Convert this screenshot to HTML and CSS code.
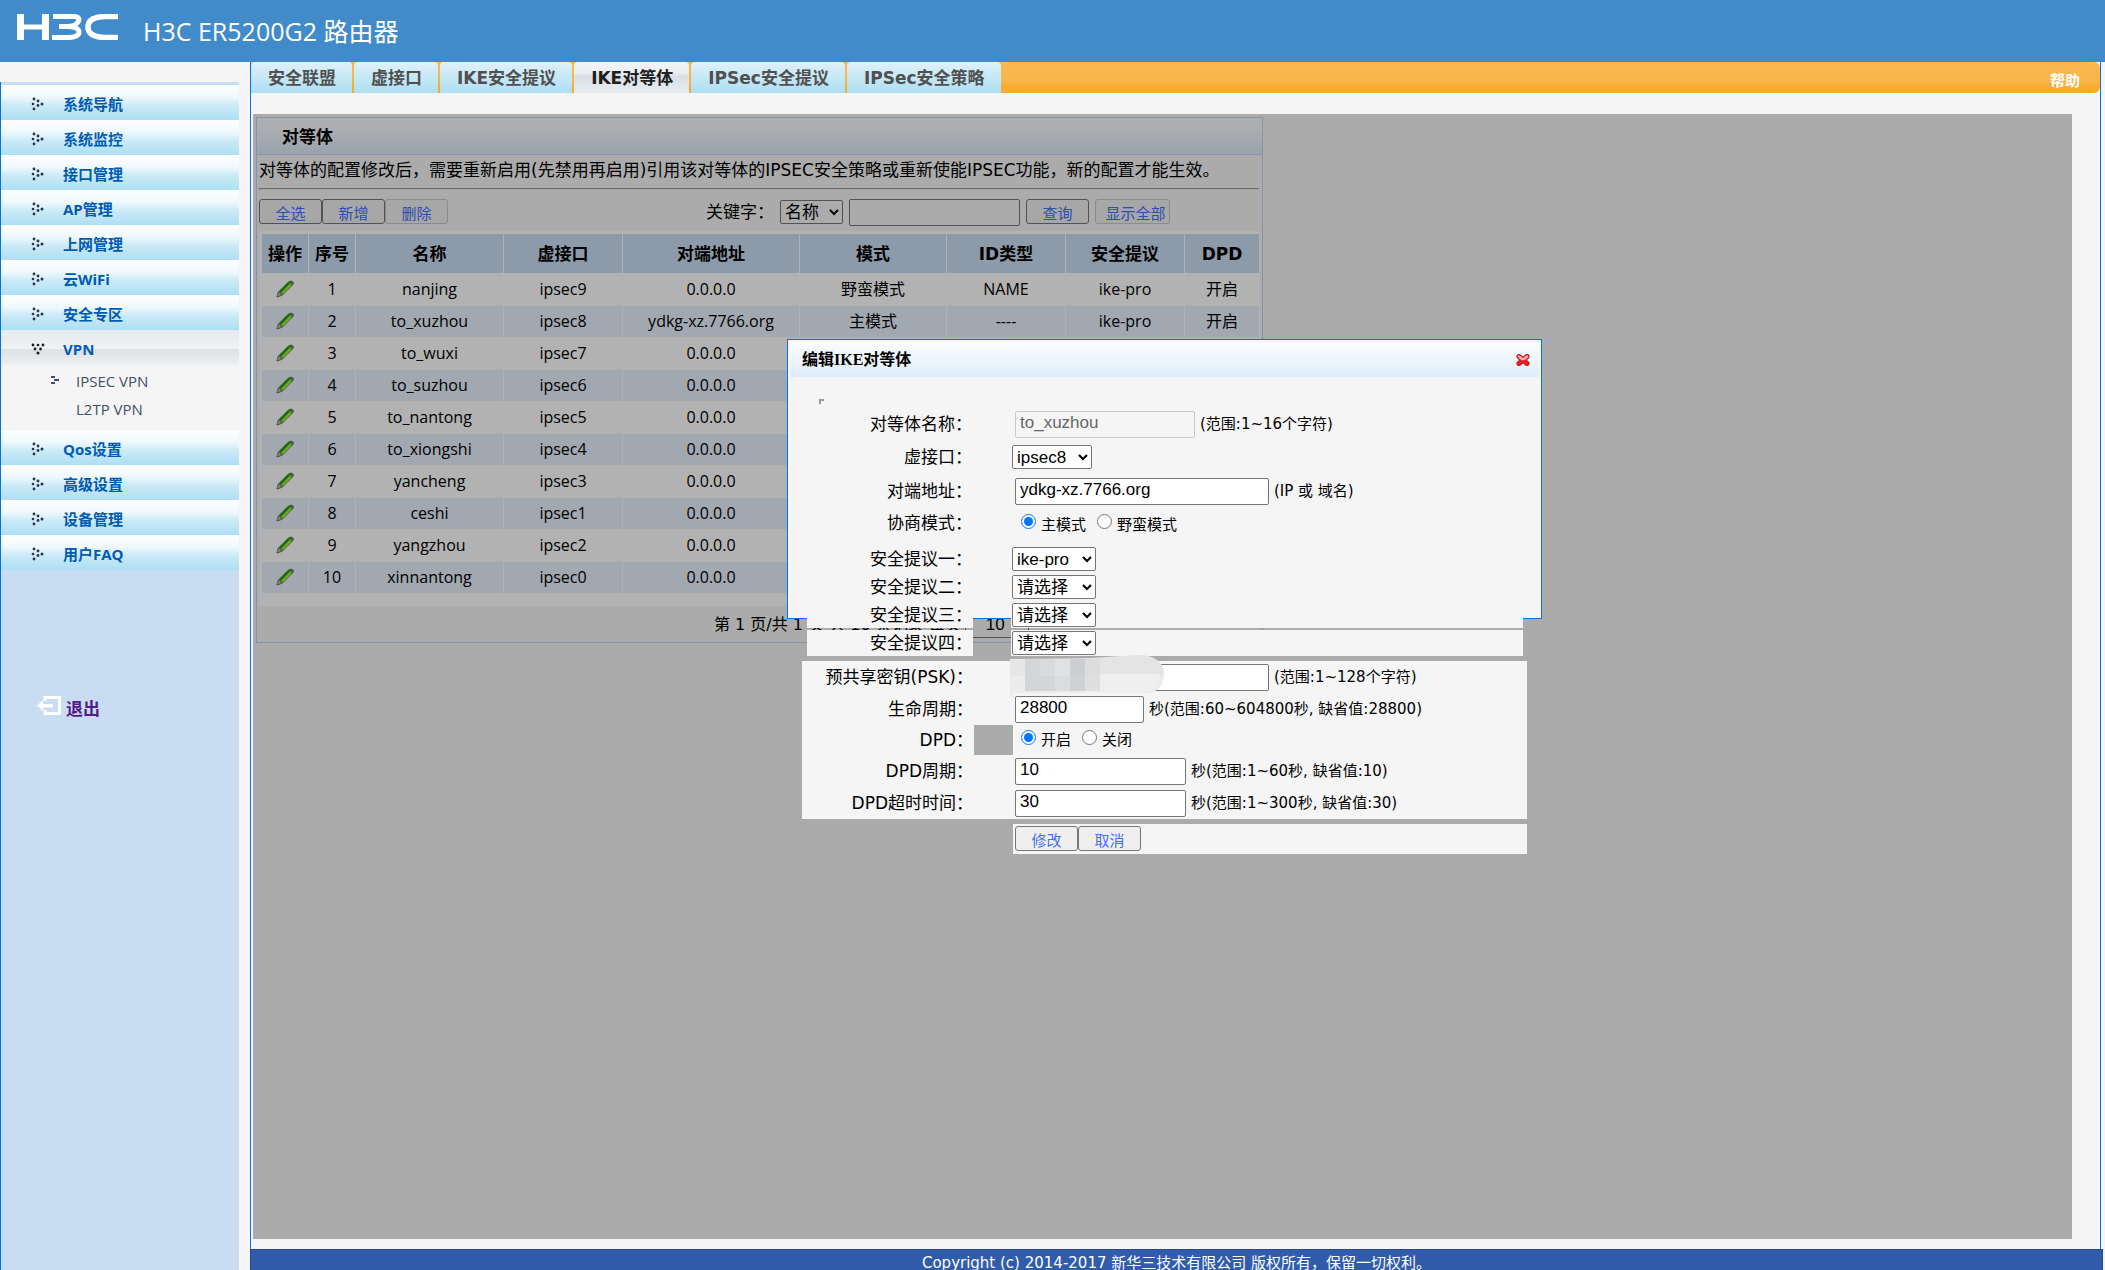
FILE: index.html
```html
<!DOCTYPE html>
<html lang="zh-CN">
<head>
<meta charset="utf-8">
<meta name="viewport" content="width=device-width, initial-scale=1">
<title>H3C ER5200G2 路由器</title>
<link rel="stylesheet" href="styles.css">
</head>
<body>
<svg class="sprite" aria-hidden="true">
  <symbol id="dots" viewBox="0 0 14 14"><g fill="#2b3550"><circle cx="3" cy="2" r="1.4"/><circle cx="7" cy="4" r="1.4"/><circle cx="2" cy="7" r="1.3"/><circle cx="11" cy="7" r="1.5"/><circle cx="7" cy="8.500" r="1.4"/><circle cx="3" cy="12" r="1.4"/></g></symbol>
  <symbol id="dots-open" viewBox="0 0 14 14"><g fill="#1c1c1c"><circle cx="2" cy="3" r="1.4"/><circle cx="7" cy="3" r="1.3"/><circle cx="12" cy="3" r="1.4"/><circle cx="4" cy="7" r="1.4"/><circle cx="9.500" cy="7" r="1.4"/><circle cx="7" cy="11" r="1.5"/></g></symbol>
  <symbol id="pencil" viewBox="0 0 18 18"><path d="M1 17 2.500 12 12.500 2Q14.500 .5 16.500 1.500T16.500 5L6.500 15Z" fill="#4fa03c" stroke="#5f7d5a"/><path d="M4 12 13 3" stroke="#1f9a1f" stroke-width="2"/><path d="M6 13.500 15 4.500" stroke="#a4e83a" stroke-width="2.500"/><path d="M1 17 2.500 12 6 15Z" fill="#c4c8ba" stroke="#7a8a74"/></symbol>
</svg>

<header class="top">
  <svg class="logo" viewBox="0 0 102 26" role="img" aria-label="H3C">
    <g fill="none" stroke="#fff">
      <path d="M3.500 0V26M28.500 0V26" stroke-width="7"/><path d="M5 13H28" stroke-width="5"/>
      <path d="M36 2.500H57Q64 3 61 8 59 12 50 12.500H42M50 12.500Q62 13 62 18T52 23.500H35" stroke-width="5"/>
      <path d="M101 2.500H88Q71 3 71 13T88 23.500H101" stroke-width="5.500"/>
    </g>
  </svg>
  <h1 class="product">H3C ER5200G2 路由器</h1>
</header>

<div class="layout">
  <nav class="side">
    <ul class="menu">
      <li><a class="item" href="#"><svg><use href="#dots"/></svg>系统导航</a></li>
      <li><a class="item" href="#"><svg><use href="#dots"/></svg>系统监控</a></li>
      <li><a class="item" href="#"><svg><use href="#dots"/></svg>接口管理</a></li>
      <li><a class="item" href="#"><svg><use href="#dots"/></svg>AP管理</a></li>
      <li><a class="item" href="#"><svg><use href="#dots"/></svg>上网管理</a></li>
      <li><a class="item" href="#"><svg><use href="#dots"/></svg>云WiFi</a></li>
      <li><a class="item" href="#"><svg><use href="#dots"/></svg>安全专区</a></li>
      <li><a class="item open" href="#"><svg><use href="#dots-open"/></svg>VPN</a>
        <ul class="submenu">
          <li><a class="current" href="#"><svg viewBox="0 0 8 8"><path d="M0 0h4v2H0zM3 3h5v2H3zM0 6h4v2H0z" fill="#3d5068"/></svg>IPSEC VPN</a></li>
          <li><a href="#">L2TP VPN</a></li>
        </ul>
      </li>
      <li><a class="item" href="#"><svg><use href="#dots"/></svg>Qos设置</a></li>
      <li><a class="item" href="#"><svg><use href="#dots"/></svg>高级设置</a></li>
      <li><a class="item" href="#"><svg><use href="#dots"/></svg>设备管理</a></li>
      <li><a class="item" href="#"><svg><use href="#dots"/></svg>用户FAQ</a></li>
    </ul>
    <a class="logout" href="#"><svg viewBox="0 0 24 20"><path d="M8 5V1.500H22.500V17.500H8V14" fill="none" stroke="#fff" stroke-width="3"/><path d="M0 9.500 6 4V8H16V11.500H6V15Z" fill="#fff"/></svg>退出</a>
  </nav>

  <main class="main">
    <div class="frame">
      <div class="tabs">
        <a class="tab" href="#">安全联盟</a>
        <a class="tab" href="#">虚接口</a>
        <a class="tab" href="#">IKE安全提议</a>
        <a class="tab active" href="#">IKE对等体</a>
        <a class="tab" href="#">IPSec安全提议</a>
        <a class="tab" href="#">IPSec安全策略</a>
        <a class="help" href="#">帮助</a>
      </div>

      <div class="content">
        <section class="panel">
          <h2 class="panel-title">对等体</h2>
          <div class="panel-body">
            <p class="tip">对等体的配置修改后，需要重新启用(先禁用再启用)引用该对等体的IPSEC安全策略或重新使能IPSEC功能，新的配置才能生效。</p>
            <hr class="rule">
            <div class="toolbar">
              <button class="btn">全选</button><button class="btn">新增</button><button class="btn" disabled>删除</button>
              <div class="search">
                <label for="field">关键字：</label>
                <select id="field" class="select"><option>名称</option></select>
                <input class="text keyword" type="text" aria-label="关键字">
                <button class="btn">查询</button>
                <button class="btn show-all" disabled>显示全部</button>
              </div>
            </div>
            <div class="table-box">
              <table class="peers">
                <colgroup><col class="c-s"><col class="c-s"><col class="c-name"><col class="c-m"><col class="c-addr"><col class="c-mode"><col class="c-m"><col class="c-m"><col class="c-dpd"></colgroup>
                <thead><tr><th>操作</th><th>序号</th><th>名称</th><th>虚接口</th><th>对端地址</th><th>模式</th><th>ID类型</th><th>安全提议</th><th>DPD</th></tr></thead>
                <tbody>
                  <tr><td><svg><use href="#pencil"/></svg></td><td>1</td><td>nanjing</td><td>ipsec9</td><td>0.0.0.0</td><td>野蛮模式</td><td>NAME</td><td>ike-pro</td><td>开启</td></tr>
                  <tr><td><svg><use href="#pencil"/></svg></td><td>2</td><td>to_xuzhou</td><td>ipsec8</td><td>ydkg-xz.7766.org</td><td>主模式</td><td>----</td><td>ike-pro</td><td>开启</td></tr>
                  <tr><td><svg><use href="#pencil"/></svg></td><td>3</td><td>to_wuxi</td><td>ipsec7</td><td>0.0.0.0</td><td></td><td></td><td></td><td></td></tr>
                  <tr><td><svg><use href="#pencil"/></svg></td><td>4</td><td>to_suzhou</td><td>ipsec6</td><td>0.0.0.0</td><td></td><td></td><td></td><td></td></tr>
                  <tr><td><svg><use href="#pencil"/></svg></td><td>5</td><td>to_nantong</td><td>ipsec5</td><td>0.0.0.0</td><td></td><td></td><td></td><td></td></tr>
                  <tr><td><svg><use href="#pencil"/></svg></td><td>6</td><td>to_xiongshi</td><td>ipsec4</td><td>0.0.0.0</td><td></td><td></td><td></td><td></td></tr>
                  <tr><td><svg><use href="#pencil"/></svg></td><td>7</td><td>yancheng</td><td>ipsec3</td><td>0.0.0.0</td><td></td><td></td><td></td><td></td></tr>
                  <tr><td><svg><use href="#pencil"/></svg></td><td>8</td><td>ceshi</td><td>ipsec1</td><td>0.0.0.0</td><td></td><td></td><td></td><td></td></tr>
                  <tr><td><svg><use href="#pencil"/></svg></td><td>9</td><td>yangzhou</td><td>ipsec2</td><td>0.0.0.0</td><td></td><td></td><td></td><td></td></tr>
                  <tr><td><svg><use href="#pencil"/></svg></td><td>10</td><td>xinnantong</td><td>ipsec0</td><td>0.0.0.0</td><td></td><td></td><td></td><td></td></tr>
                </tbody>
              </table>
            </div>
            <div class="pager">
              <label for="size">第 1 页/共 1 页 共 10 条记录 每页</label>
              <input id="size" class="text page-size" type="text" value="10">
            </div>
          </div>
        </section>
        <div class="backdrop"></div>

        <form class="dialog">
          <div class="dialog-title">
            <h2>编辑IKE对等体</h2>
            <button type="button" class="close" aria-label="关闭"><svg viewBox="0 0 14 12"><path d="M3 2.500 11 9.500M11 2.500 3 9.500" stroke="#b31d1d" stroke-width="5" stroke-linecap="round"/><path d="M3 2.500 11 9.500M11 2.500 3 9.500" stroke="#f01f1f" stroke-width="3" stroke-linecap="round"/><path d="M3 2.500 6 5M11 2.500 8 5" stroke="#ffb0b0" stroke-width="2.500" stroke-linecap="round"/></svg></button>
          </div>
          <hr class="corner">
          <div class="group upper">
            <div class="row"><label class="name" for="peer">对等体名称：</label><div class="value"><input id="peer" class="text w-180" type="text" value="to_xuzhou" disabled><span>(范围:1~16个字符)</span></div></div>
            <div class="row row-s"><label class="name" for="iface">虚接口：</label><div class="value"><select id="iface" class="select"><option>ipsec8</option></select></div></div>
            <div class="row addr"><label class="name" for="addr">对端地址：</label><div class="value"><input id="addr" class="text w-254" type="text" value="ydkg-xz.7766.org"><span>(IP 或 域名)</span></div></div>
            <div class="row mode"><span class="name">协商模式：</span><div class="value radios"><label><input type="radio" name="mode" checked>主模式</label><label><input type="radio" name="mode">野蛮模式</label></div></div>
            <div class="row row-p"><label class="name" for="p1">安全提议一：</label><div class="value"><select id="p1" class="select w-84"><option>ike-pro</option></select></div></div>
            <div class="row row-p"><label class="name" for="p2">安全提议二：</label><div class="value"><select id="p2" class="select w-84"><option>请选择</option></select></div></div>
            <div class="row row-p"><label class="name" for="p3">安全提议三：</label><div class="value"><select id="p3" class="select w-84"><option>请选择</option></select></div></div>
            <div class="row row-p"><label class="name" for="p4">安全提议四：</label><div class="value"><select id="p4" class="select w-84"><option>请选择</option></select></div></div>
          </div>
          <div class="group lower">
            <div class="row solid"><label class="name" for="psk">预共享密钥(PSK)：</label><div class="value"><input id="psk" class="text w-254" type="text"><span>(范围:1~128个字符)</span>
              <svg class="mask" viewBox="0 0 155 44"><path d="M0 4 100 3Q125 0 134 0 155 4 154 21T131 40Q110 41 80 43L0 42Z" fill="#ececec"/><path d="M70 4Q120 0 134 0 155 5 154 21L70 24Z" fill="#e4e4e4"/><path d="M75 19H150Q148 36 131 38H75Z" fill="#efefef"/><path d="M0 5H15V21H0z" fill="#e6e6e6"/><path d="M15 4H30V21H15z" fill="#d5d6d8"/><path d="M30 4H45V21H30z" fill="#dadbdd"/><path d="M45 4H60V21H45z" fill="#e0e1e2"/><path d="M60 4H75V21H60z" fill="#ccced1"/><path d="M75 4H90V21H75z" fill="#dcdddf"/><path d="M15 21H45V36H15z" fill="#d4d5d8"/><path d="M45 21H60V36H45z" fill="#dbdcde"/><path d="M60 21H75V36H60z" fill="#d0d1d5"/><path d="M75 21H90V36H75z" fill="#dfdfe1"/></svg>
            </div></div>
            <div class="row solid"><label class="name" for="life">生命周期：</label><div class="value"><input id="life" class="text w-129" type="text" value="28800"><span>秒(范围:60~604800秒, 缺省值:28800)</span></div></div>
            <div class="row dpd"><span class="name">DPD：</span><div class="value radios"><label><input type="radio" name="dpd" checked>开启</label><label><input type="radio" name="dpd">关闭</label></div></div>
            <div class="row solid"><label class="name" for="cycle">DPD周期：</label><div class="value"><input id="cycle" class="text w-171" type="text" value="10"><span>秒(范围:1~60秒, 缺省值:10)</span></div></div>
            <div class="row solid"><label class="name" for="timeout">DPD超时时间：</label><div class="value"><input id="timeout" class="text w-171" type="text" value="30"><span>秒(范围:1~300秒, 缺省值:30)</span></div></div>
          </div>
          <div class="actions"><button type="button" class="btn">修改</button><button type="button" class="btn">取消</button></div>
        </form>
      </div>
    </div>
    <footer class="footer">Copyright (c) 2014-2017 新华三技术有限公司 版权所有，保留一切权利。</footer>
  </main>
</div>
</body>
</html>
```

FILE: styles.css
```css
* { box-sizing: border-box; }

body {
  margin: 0;
  height: 100vh;
  display: flex;
  flex-direction: column;
  overflow: hidden;
  background: #f5f5f5;
  color: #000;
  font: 17px/24px "DejaVu Sans", "Noto Sans CJK SC", sans-serif;
}

a { text-decoration: none; }
ul { list-style: none; margin: 0; padding: 0; }
h1, h2, p { margin: 0; }
.sprite { position: absolute; width: 0; height: 0; }

/* header */
.top {
  flex: none;
  height: 62px;
  padding: 0 17px;
  display: flex;
  gap: 24px;
  background: #428bca;
  color: #fff;
}
.logo { width: 102px; height: 26px; margin-top: 14px; }
.product { font: 400 25px/62px "Open Sans", "Noto Sans CJK SC", sans-serif; }

.layout { flex: 1; display: flex; min-height: 0; }

/* side menu */
.side {
  flex: none;
  width: 239px;
  margin: 20px 11px 0 0;
  padding-top: 3px;
  border-left: 1px solid #0073f0;
  background: #c8ddf1;
  font: 15px/28px "Open Sans", "Noto Sans CJK SC", sans-serif;
}
.item {
  display: flex;
  align-items: center;
  gap: 18px;
  height: 35px;
  padding: 2px 0 0 30px;
  background: linear-gradient(#fff, #eef8fd 35%, #caeaf7 60%, #addff3);
  color: #005bb5;
  font-weight: 700;
}
.item svg { width: 14px; height: 14px; }
.item.open { background: linear-gradient(#e6eaee, #f0f2f4 53%, #dce1e5 56%, #eef1f4); }
.submenu { height: 65px; padding-top: 2px; background: #f5f5f5; }
.submenu a { display: flex; align-items: center; padding-left: 75px; color: #3d5068; }
.submenu .current { padding-left: 50px; gap: 17px; }
.submenu svg { width: 8px; height: 8px; margin-top: -2px; }
.logout {
  display: flex;
  align-items: center;
  gap: 5px;
  margin: 125px 0 0 36px;
  color: #551a8b;
  font-size: 17px;
  font-weight: 700;
}
.logout svg { width: 24px; height: 20px; margin-top: -6px; }

/* main frame */
.main { flex: 1; min-width: 0; display: flex; flex-direction: column; padding-right: 2px; }
.frame {
  flex: 1;
  min-height: 0;
  display: flex;
  flex-direction: column;
  margin-right: 2px;
  border: solid #0073f0;
  border-width: 0 1px;
}
.tabs {
  flex: none;
  display: flex;
  gap: 2px;
  height: 31px;
  padding-right: 20px;
  border-radius: 0 6px 6px 0;
  background: linear-gradient(#f9b851, #f8b54a 65%, #f7ab32 75%, #f7ab32);
  font-weight: 700;
}
.tab {
  padding: 0 16px 0 17px;
  border-radius: 4px 4px 0 0;
  background: linear-gradient(#dff1fa, #c6e8f5 50%, #addff3);
  color: #505050;
  line-height: 32px;
}
.tab.active { background: linear-gradient(#f2f3f5, #eceef1 35%, #dadfe4 45%, #e9edf0); color: #202020; }
.help { margin-left: auto; color: #fff; font-size: 15px; line-height: 38px; }

.content { position: relative; flex: 1; margin: 21px 28px 10px 2px; padding: 3px; }
.backdrop { position: absolute; inset: 0; background: rgba(0, 0, 0, .3); }

/* peer list */
.panel { width: 1007px; border: 1px solid #bfd6ee; }
.panel-title {
  height: 37px;
  padding-left: 25px;
  border-bottom: 1px solid #bfd6ee;
  background: linear-gradient(#fcfcfd, #f2f6fb 45%, #dbe9fa);
  font-size: 17px;
  line-height: 38px;
}
.panel-body { padding: 3px 2px 0; }
.tip { line-height: 24px; }
.rule { height: 2px; margin: 6px 1px 9px 0; border: solid #9a9a9a; border-width: 1px 0 0 1px; background: #eee; }
.toolbar { display: flex; height: 32px; }
.btn {
  flex: none;
  width: 63px;
  height: 25px;
  padding: 2px 0 0;
  border: 1px solid #767676;
  border-radius: 3px;
  background: #efefef;
  color: #4370f5;
  font: 15px/20px "Noto Sans CJK SC", sans-serif;
}
.btn:disabled { border-color: #c8c8c8; background: #f0f0f0; }
.btn.show-all { width: 75px; padding-left: 6px; }
.search { display: flex; gap: 6px; margin: 0 90px 0 auto; }
.search label { line-height: 26px; }
.search .select { margin-top: 1px; width: 63px; }
.text {
  height: 27px;
  padding: 0 4px 2px;
  border: 1px solid #767676;
  border-radius: 2px;
  background: #fff;
  color: #000;
  font: 17px "Liberation Sans", "Noto Sans CJK SC", sans-serif;
}
.text:disabled { border-color: #c9c9c9; background: #f5f5f5; color: #666; }
.select {
  width: 80px;
  height: 24px;
  padding: 0;
  border: 1px solid #767676;
  border-radius: 2px;
  background: #fff;
  color: #000;
  font: 17px "Liberation Sans", "Noto Sans CJK SC", sans-serif;
}
.toolbar .select, .toolbar .text, .pager .text { background: #f5f5f5; }
.keyword { width: 171px; }

.table-box { height: 375px; padding: 2px 0 0 2px; background: #fff; }
.peers { width: 999px; table-layout: fixed; border-spacing: 1px; }
.c-s { width: 46px; }
.c-name { width: 147px; }
.c-m { width: 118px; }
.c-addr { width: 176px; }
.c-mode { width: 146px; }
.peers th, .peers td { padding: 0; text-align: center; }
.peers th { height: 39px; padding-top: 1px; background: #cbddf2; }
.peers td { height: 31px; padding-bottom: 1px; font: 16px/24px "Open Sans", "Noto Sans CJK SC", sans-serif; }
.peers tr:nth-child(even) td { background: #e7f1fd; }
.peers svg { display: block; width: 18px; height: 18px; margin: 0 auto; }

.pager { display: flex; align-items: center; gap: 4px; height: 36px; padding: 1px 0 0 455px; font-size: 16px; }
.page-size { width: 64px; padding: 0 20px; }

/* edit dialog */
.dialog {
  position: absolute;
  left: 534px;
  top: 225px;
  width: 755px;
  height: 280px;
  padding: 2px;
  border: 1px solid #0073f0;
  background: #f5f5f5;
}
.dialog-title {
  display: flex;
  justify-content: space-between;
  align-items: center;
  height: 35px;
  padding: 0 9px 0 12px;
  background: linear-gradient(#fbfdff, #ecf3fb 60%, #deebfb);
}
.dialog-title h2 { font: 700 16px/24px "Liberation Serif", "Noto Sans CJK SC", serif; }
.close { width: 14px; height: 12px; padding: 0; border: 0; background: none; }
.close svg { display: block; width: 14px; height: 12px; }
.corner { width: 5px; height: 5px; margin: 22px 0 0 29px; border: solid #999; border-width: 2px 0 0 2px; }
.group { width: 716px; }
.upper { display: grid; gap: 2px; margin: 3px 0 0 17px; }
.row { display: flex; justify-content: space-between; height: 34px; }
.row-s { height: 28px; }
.row-p { height: 26px; }
.addr { height: 36px; }
.mode { height: 33px; }
.name {
  width: 166px;
  display: flex;
  align-items: center;
  justify-content: flex-end;
  padding-right: 1px;
  background: #f5f5f5;
}
.value {
  position: relative;
  width: 512px;
  display: flex;
  align-items: center;
  gap: 5px;
  padding-left: 4px;
  background: #f5f5f5;
  font-size: 15px;
}
.row-s .value, .row-p .value { padding-left: 1px; }
.mode .name { padding-bottom: 10px; }
.mode .value { padding-bottom: 6px; }
.radios label { display: flex; align-items: center; gap: 5px; line-height: 24px; }
.radios input { width: 15px; height: 15px; margin: 0 0 6px 6px; }
.w-84 { width: 84px; }
.w-129 { width: 129px; }
.w-171 { width: 171px; }
.w-180 { width: 180px; }
.w-254 { width: 254px; }

.lower { width: 725px; margin: 5px 0 5px 12px; }
.lower .row { height: 32px; }
.lower .name { width: 172px; }
.lower .value { width: 514px; padding-left: 2px; }
.lower .solid { background: #f5f5f5; }
.lower .dpd { height: 30px; }
.mask { position: absolute; left: -3px; top: -6px; width: 155px; height: 44px; }
.actions { width: 514px; height: 30px; margin-left: 223px; padding: 2px; background: #f5f5f5; }
.actions .btn { vertical-align: top; }

.footer {
  flex: none;
  height: 21px;
  overflow: hidden;
  border: solid #274a8c;
  border-width: 1px 1px 0;
  background: #305cab;
  color: #fff;
  font-size: 15px;
  line-height: 26px;
  text-align: center;
}
```
